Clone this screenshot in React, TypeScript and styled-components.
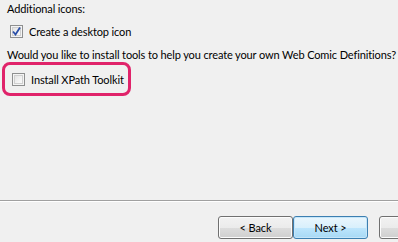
import React from "react";
import styled, { createGlobalStyle } from "styled-components";

const Global = createGlobalStyle`
  html, body { margin: 0; padding: 0; background: #f0f0f0; }
  body { width: 398px; height: 242px; overflow: hidden; font-family: Lato, "Liberation Sans", sans-serif; font-size: 11px; letter-spacing: -0.12px; color: #000; }
`;

const Page = styled.div`
  width: 398px;
  height: 242px;
  overflow: hidden;
  display: flex;
  flex-direction: column;
  background: #f0f0f0;
`;

const Content = styled.div`
  flex: 1;
  display: flex;
  flex-direction: column;
  padding: 1px 0 0 7px;
`;

const Text = styled.div<{ $top?: number }>`
  line-height: 15px;
  margin-top: ${(p) => p.$top ?? 0}px;
  white-space: nowrap;
`;

const Highlight = styled.div`
  align-self: flex-start;
  box-sizing: border-box;
  margin: 0 0 0 -5px;
  padding: 0 0 0 4px;
  height: 34px;
  width: 129px;
  display: flex;
  align-items: center;
  border: 3px solid #e0236a;
  border-radius: 8px;
`;

const CheckRow = styled.label<{ $top?: number }>`
  display: flex;
  align-items: center;
  gap: 6px;
  height: 15px;
  margin-top: ${(p) => p.$top ?? 0}px;
  padding-left: 3px;
  white-space: nowrap;
`;

const Box = styled.span`
  box-sizing: border-box;
  width: 13px;
  height: 13px;
  border: 1px solid #8e8f8f;
  background: linear-gradient(135deg, #dcdcdc 0%, #f4f4f4 60%, #ffffff 100%);
  box-shadow: inset 0 0 0 1px #f4f4f4, inset 0 0 0 2px #cfcfcf;
  display: inline-flex;
  align-items: center;
  justify-content: center;
  flex: none;
`;

const Footer = styled.div`
  display: flex;
  flex-direction: column;
`;

const Separator = styled.div`
  height: 1px;
  background: #a0a0a0;
  border-bottom: 1px solid #ffffff;
`;

const Buttons = styled.div`
  display: flex;
  overflow: hidden;
  padding: 14px 0 3px 218px;
`;

const Button = styled.div<{ $primary?: boolean; $gap?: number }>`
  box-sizing: border-box;
  width: 75px;
  height: 23px;
  margin-left: ${(p) => p.$gap ?? 0}px;
  flex: none;
  display: flex;
  align-items: center;
  justify-content: center;
  border-radius: 3px;
  border: 1px solid ${(p) => (p.$primary ? "#3c7fb1" : "#707070")};
  background: ${(p) =>
    p.$primary
      ? "linear-gradient(#eaf6fd 0%, #d9f0fc 50%, #bee6fd 50%, #a7d9f5 100%)"
      : "linear-gradient(#f2f2f2 0%, #ebebeb 50%, #dddddd 50%, #cfcfcf 100%)"};
  box-shadow: inset 0 0 0 1px ${(p) => (p.$primary ? "#c6e6f9" : "#fcfcfc")};
  white-space: nowrap;
`;

const Check = () => (
  <svg width="9" height="9" viewBox="0 0 9 9">
    <path d="M1 4.5 L3.5 7.5 L8 0.5" fill="none" stroke="#2a4fa8" strokeWidth="1.8" />
  </svg>
);

export default function App() {
  return (
    <Page>
      <Global />
      <Content>
        <Text>Additional icons:</Text>
        <CheckRow $top={8}>
          <Box>
            <Check />
          </Box>
          Create a desktop icon
        </CheckRow>
        <Text $top={8}>
          Would you like to install tools to help you create your own Web Comic Definitions?
        </Text>
        <Highlight>
          <CheckRow>
            <Box />
            Install XPath Toolkit
          </CheckRow>
        </Highlight>
      </Content>
      <Footer>
        <Separator />
        <Buttons>
          <Button>&lt; Back</Button>
          <Button $primary>Next &gt;</Button>
          <Button $gap={11} />
        </Buttons>
      </Footer>
    </Page>
  );
}
